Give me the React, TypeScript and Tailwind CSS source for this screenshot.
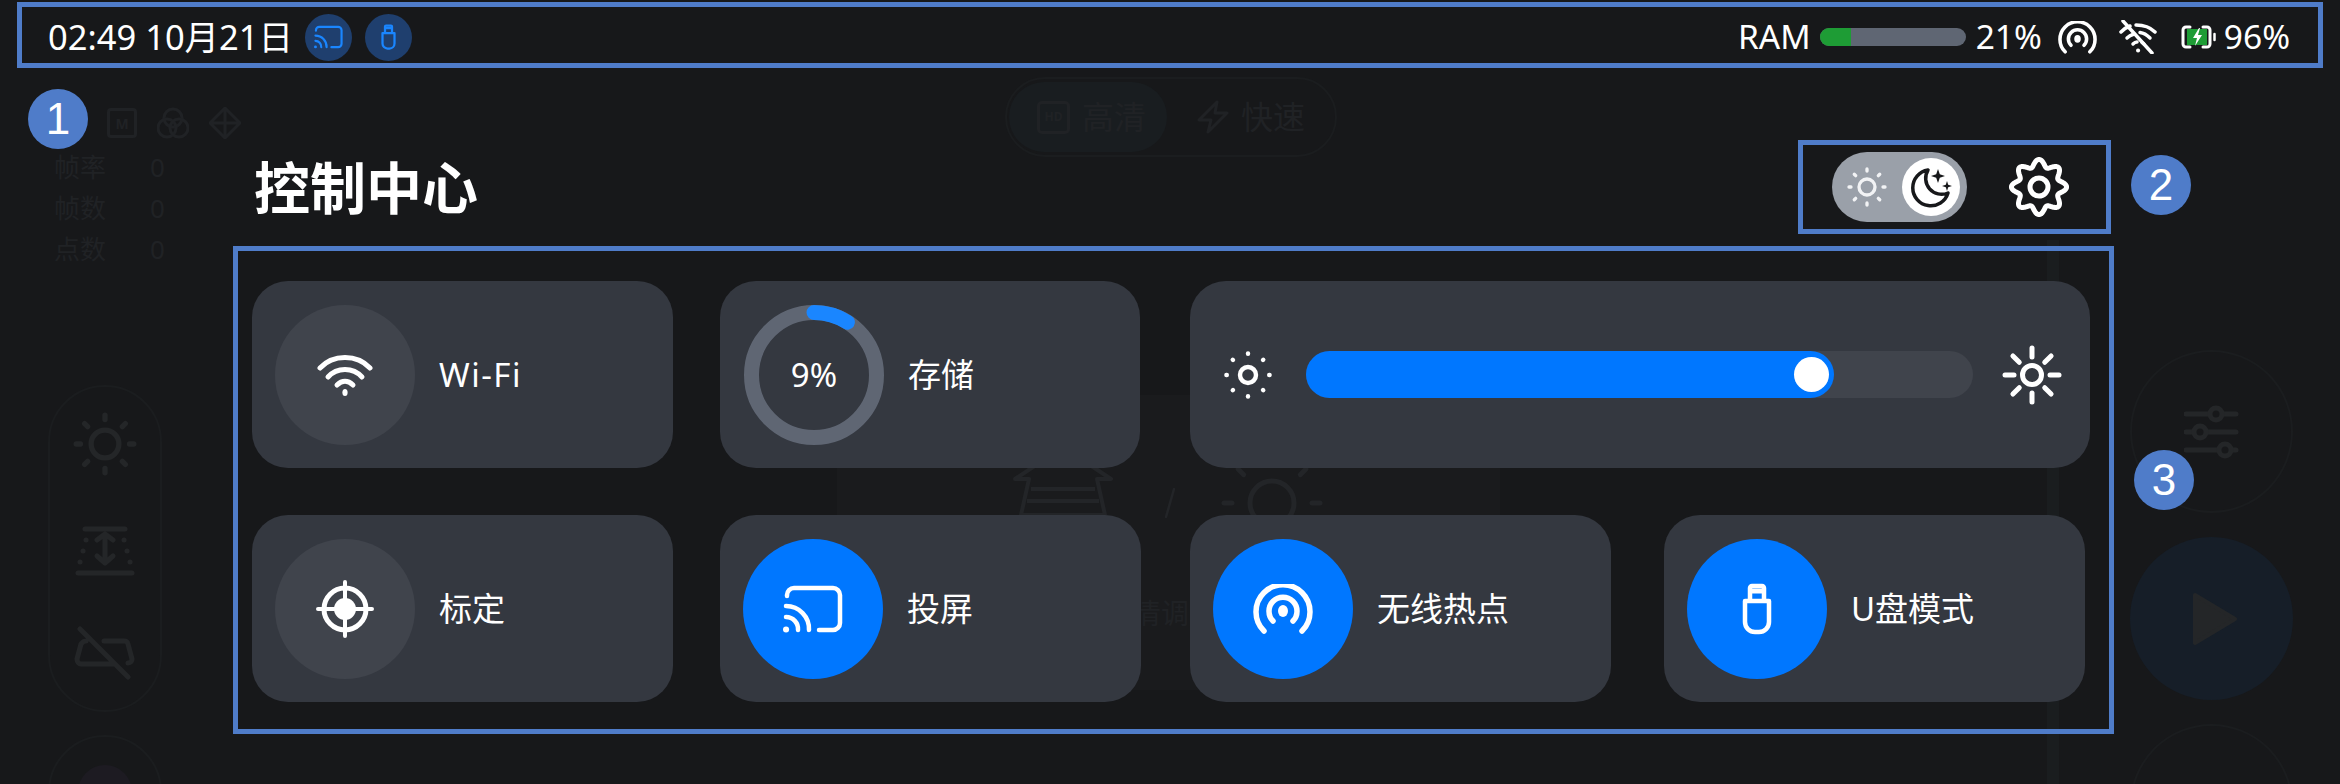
import React from "react";

const WHITE = "#ffffff";

// scalloped outline for the settings gear
const gearPath = (() => {
  const pts: string[] = [];
  for (let i = 0; i <= 160; i++) {
    const t = (i / 160) * Math.PI * 2;
    const r = 24 + 3.6 * Math.cos(8 * t);
    const x = 30 + r * Math.sin(t);
    const y = 30 - r * Math.cos(t);
    pts.push(`${i === 0 ? "M" : "L"}${x.toFixed(2)} ${y.toFixed(2)}`);
  }
  return pts.join(" ") + "Z";
})();

const CastIcon = ({ w, h, color = WHITE }: { w: number; h: number; color?: string }) => (
  <svg width={w} height={h} viewBox="0 0 60 48" fill="none" stroke={color} strokeWidth="4.5" strokeLinecap="round">
    <path d="M4 11V10a7 7 0 0 1 7-7h39a7 7 0 0 1 7 7v28a7 7 0 0 1-7 7H36" />
    <path d="M3 21a23 23 0 0 1 23 24" />
    <path d="M3 32a12 12 0 0 1 12 13" />
    <path d="M3 44.5h.1" strokeWidth="6" />
  </svg>
);

const UsbIcon = ({ w, h, color = WHITE }: { w: number; h: number; color?: string }) => (
  <svg width={w} height={h} viewBox="0 0 30 52" fill="none" stroke={color} strokeWidth="4.5" strokeLinejoin="round">
    <path d="M3 18h24v21a10 10 0 0 1-10 10h-4A10 10 0 0 1 3 39z" />
    <path d="M8 18V5a2 2 0 0 1 2-2h10a2 2 0 0 1 2 2v13" />
    <path d="M9 8h12" strokeWidth="5" />
  </svg>
);

const HotspotIcon = ({ w, h }: { w: number; h: number }) => (
  <svg width={w} height={h} viewBox="0 0 60 50" fill="none" stroke={WHITE} strokeWidth="5.5" strokeLinecap="round">
    <path d="M11 47a27 27 0 1 1 38 0" />
    <path d="M20 37a14 14 0 1 1 20 0" />
    <ellipse cx="30" cy="27" rx="5" ry="6" fill={WHITE} stroke="none" />
  </svg>
);

const WifiIcon = ({ w, h }: { w: number; h: number }) => (
  <svg width={w} height={h} viewBox="0 0 56 42" fill="none" stroke={WHITE} strokeWidth="5" strokeLinecap="round">
    <path d="M3 14C16 0 40 0 53 14" />
    <path d="M11 23C20 13 36 13 45 23" />
    <path d="M20 31C25 26 31 26 36 31" />
    <ellipse cx="28" cy="38.5" rx="2.6" ry="3.5" fill={WHITE} stroke="none" />
  </svg>
);

const WifiOffIcon = () => (
  <svg width="38" height="34" viewBox="0 0 38 34" fill="none" stroke={WHITE} strokeWidth="3.5" strokeLinecap="round">
    <path d="M2 12C5 9 8 7 11 6" />
    <path d="M17 5C24 5 31 7 36 12" />
    <path d="M8 18C10 16 12 15 15 14" />
    <path d="M21 12.5C25 13 28 15 31 18" />
    <path d="M14 24C15 23 16 22 18 22" />
    <path d="M23 22.5C24 23 25 23.5 25 24" />
    <path d="M19 30.5h.1" strokeWidth="4" />
    <path d="M4 1l29 32" />
  </svg>
);

const BatteryIcon = () => (
  <svg width="36" height="24" viewBox="0 0 36 24" fill="none">
    <rect x="7" y="4" width="20" height="16" fill="#1e9c35" />
    <path d="M10 2H6a3 3 0 0 0-3 3v14a3 3 0 0 0 3 3h4" stroke={WHITE} strokeWidth="3" strokeLinecap="round" />
    <path d="M23 2h4a3 3 0 0 1 3 3v14a3 3 0 0 1-3 3h-4" stroke={WHITE} strokeWidth="3" strokeLinecap="round" />
    <path d="M34.5 9v6" stroke={WHITE} strokeWidth="2.5" strokeLinecap="round" />
    <path d="M19 3l-6 10h4l-2 8 7-11h-4l2-7z" fill={WHITE} />
  </svg>
);

const TargetIcon = () => (
  <svg width="58" height="58" viewBox="0 0 58 58" fill="none" stroke={WHITE} strokeLinecap="round">
    <circle cx="29" cy="29" r="21" strokeWidth="5" />
    <circle cx="29" cy="29" r="11" fill={WHITE} stroke="none" />
    <path d="M29 2v54M2 29h54" strokeWidth="4" />
  </svg>
);

const SunIcon = ({
  size,
  r,
  inner,
  outer,
  sw,
  color = WHITE,
}: {
  size: number;
  r: number;
  inner: number;
  outer: number;
  sw: number;
  color?: string;
}) => {
  const ticks = [0, 45, 90, 135, 180, 225, 270, 315];
  return (
    <svg width={size} height={size} viewBox="0 0 60 60" fill="none" stroke={color} strokeWidth={sw} strokeLinecap="round">
      <circle cx="30" cy="30" r={r} />
      {ticks.map((a) => {
        const rad = (a * Math.PI) / 180;
        return (
          <line
            key={a}
            x1={30 + inner * Math.cos(rad)}
            y1={30 + inner * Math.sin(rad)}
            x2={30 + outer * Math.cos(rad)}
            y2={30 + outer * Math.sin(rad)}
          />
        );
      })}
    </svg>
  );
};

const MoonIcon = () => (
  <svg width="44" height="44" viewBox="0 0 44 44" fill="none">
    <path
      d="M19 5A18 18 0 1 0 39 28A16 16 0 0 1 19 5Z"
      fill={WHITE}
      stroke="#17181a"
      strokeWidth="3.5"
      strokeLinejoin="round"
    />
    <path d="M29 4l1.8 5.2L36 11l-5.2 1.8L29 18l-1.8-5.2L22 11l5.2-1.8z" fill="#17181a" />
    <path d="M38 16l1.2 3.8L43 21l-3.8 1.2L38 26l-1.2-3.8L33 21l3.8-1.2z" fill="#17181a" />
  </svg>
);

const GearIcon = () => (
  <svg width="60" height="60" viewBox="0 0 60 60" fill="none" stroke={WHITE} strokeWidth="5" strokeLinejoin="round">
    <path d={gearPath} />
    <circle cx="30" cy="30" r="9" />
  </svg>
);

const StorageRing = () => (
  <div className="relative w-[140px] h-[140px] shrink-0 flex items-center justify-center">
    <svg className="absolute inset-0 -rotate-90" width="140" height="140" viewBox="0 0 140 140" fill="none">
      <circle cx="70" cy="70" r="62.5" stroke="#5f6673" strokeWidth="15" />
      <circle
        cx="70"
        cy="70"
        r="62.5"
        stroke="#1a86ff"
        strokeWidth="15"
        strokeLinecap="round"
        pathLength={100}
        strokeDasharray="9 91"
      />
    </svg>
    <span className="text-[33px] leading-none text-white">9%</span>
  </div>
);

const Tile = ({
  label,
  active,
  icon,
  className,
}: {
  label: React.ReactNode;
  active?: boolean;
  icon: React.ReactNode;
  className?: string;
}) => (
  <div className={`w-[421px] h-[187px] shrink-0 rounded-[36px] bg-[#343840] flex items-center pl-[23px] gap-[24px] ${className ?? ""}`}>
    <div className={`w-[140px] h-[140px] rounded-full flex items-center justify-center ${active ? "bg-[#0077ff]" : "bg-[#40444c]"}`}>
      {icon}
    </div>
    <span className="text-[33px] leading-none text-white">{label}</span>
  </div>
);

// the dimmed app behind the control center
const DimmedApp = () => (
  <div className="absolute inset-0 flex text-[#202225]">
    <div className="w-[837px] shrink-0 pl-[48px] pt-[108px]">
      <div className="flex items-center gap-[20px] ml-[59px] h-[30px]">
        <div className="w-[30px] h-[30px] rounded-[4px] border-[3px] border-[#202225] flex items-center justify-center text-[14px] font-bold">M</div>
        <svg width="32" height="32" viewBox="0 0 32 32" fill="none" stroke="#202225" strokeWidth="3">
          <circle cx="16" cy="11" r="9" />
          <circle cx="10" cy="21" r="9" />
          <circle cx="22" cy="21" r="9" />
        </svg>
        <svg width="32" height="32" viewBox="0 0 32 32" fill="none" stroke="#202225" strokeWidth="3" strokeLinejoin="round">
          <path d="M16 1l15 15-15 15L1 16zM16 1v30M1 16h30" />
        </svg>
      </div>
      <div className="mt-[9px] ml-[6px] flex flex-col text-[26px] leading-[41px]">
        {["帧率", "帧数", "点数"].map((s) => (
          <div key={s} className="flex gap-[44px]">
            <span>{s}</span>
            <span>0</span>
          </div>
        ))}
      </div>
      <div className="mt-[115px] w-[114px] h-[327px] rounded-full border-[2px] border-[#1b1d1f] flex flex-col items-center pt-[25px] gap-[50px]">
        <SunIcon size={64} r={13} inner={23} outer={27} sw={5} color="#242628" />
        <svg width="60" height="50" viewBox="0 0 60 50" fill="none" stroke="#242628" strokeWidth="5" strokeLinecap="round" strokeLinejoin="round">
          <path d="M10 3h40M3 47h54M30 8v28M22 14l8-6 8 6M22 30l8 7 8-7" />
          <path d="M11 14h.1M8 25h.1M5 36h.1M49 14h.1M52 25h.1M55 36h.1" />
        </svg>
        <svg width="62" height="54" viewBox="0 0 62 54" fill="none" stroke="#242628" strokeWidth="5" strokeLinecap="round" strokeLinejoin="round">
          <path d="M6 3l48 48M30 15h20a4 4 0 0 1 4 3l4 15c0 2-1 4-4 4M12 15c-3 0-4 2-5 3L3 33c0 3 2 5 4 5h33" />
        </svg>
      </div>
      <div className="mt-[23px] w-[114px] h-[114px] rounded-full border-[2px] border-[#1b1d1f] flex justify-center pt-[28px]">
        <div className="w-[54px] h-[54px] rounded-full bg-[#1d1b22]" />
      </div>
    </div>

    <div className="w-[663px] shrink-0 pt-[77px]">
      <div className="ml-[168px] w-[332px] h-[80px] rounded-full border-[2px] border-[#1b1d1f] flex items-center text-[32px] leading-none p-[2px]">
        <div className="w-[158px] h-[70px] rounded-full bg-[#191d20] flex items-center pl-[28px] gap-[12px]">
          <div className="w-[33px] h-[33px] rounded-[5px] border-[3px] border-[#202225] flex items-center justify-center text-[12px] font-bold">HD</div>
          <span>高清</span>
        </div>
        <div className="flex items-center gap-[12px] ml-[30px]">
          <svg width="32" height="34" viewBox="0 0 32 34" fill="none" stroke="#202225" strokeWidth="3" strokeLinejoin="round">
            <path d="M20 2L2 20h12l-3 12 19-19H18z" />
          </svg>
          <span>快速</span>
        </div>
      </div>
      <div className="mt-[238px] h-[295px] bg-[#1a1b1d] flex flex-col pl-[176px] pt-[48px]">
        <div className="flex items-start">
          <svg width="100" height="72" viewBox="0 0 100 72" fill="none" stroke="#232528" strokeWidth="4" strokeLinejoin="round">
            <path d="M2 36L50 4l48 32H84L92 72H8l8-36z" />
            <path d="M18 46h64M14 58h72" />
          </svg>
          <svg width="10" height="30" viewBox="0 0 10 30" fill="none" stroke="#232528" strokeWidth="2.5" strokeLinecap="round" className="ml-[52px] mt-[45px]">
            <path d="M9 1L1 29" />
          </svg>
          <div className="ml-[37px]">
            <SunIcon size={120} r={11} inner={20} outer={24} sw={2.5} color="#232528" />
          </div>
        </div>
        <span className="mt-[35px] ml-[120px] text-[28px] leading-[30px]">清调</span>
      </div>
    </div>

    <div className="w-[547px] shrink-0" />
    <div className="w-[12px] shrink-0 mt-[240px] bg-[#1a1d1f]" />
    <div className="w-[163px] shrink-0 ml-[71px] pt-[350px] flex flex-col gap-[24px]">
      <div className="h-[163px] shrink-0 rounded-full border-[2px] border-[#1b1d1f] flex items-center justify-center">
        <svg width="56" height="56" viewBox="0 0 56 56" fill="none" stroke="#242628" strokeWidth="5" strokeLinecap="round">
          <path d="M2 10h50M2 28h50M2 46h50" />
          <circle cx="32" cy="10" r="6" fill="#17181a" />
          <circle cx="16" cy="28" r="6" fill="#17181a" />
          <circle cx="41" cy="46" r="6" fill="#17181a" />
        </svg>
      </div>
      <div className="h-[163px] shrink-0 rounded-full bg-[#161e28] flex items-center justify-center">
        <svg width="46" height="54" viewBox="0 0 46 54" className="ml-[6px]">
          <path d="M3 3l40 24-40 24z" fill="#242628" stroke="#242628" strokeWidth="4" strokeLinejoin="round" />
        </svg>
      </div>
      <div className="h-[163px] shrink-0 rounded-full border-[2px] border-[#1b1d1f]" />
    </div>
  </div>
);

const StatusBar = () => (
  <div className="h-[74px] pl-[48px] pr-[50px] flex items-center justify-between leading-none text-white">
    <div className="flex items-center text-[34.5px]">
      <span>02:49 10月21日</span>
      <div className="ml-[12px] w-[47px] h-[47px] rounded-full bg-[#1f3f6e] flex items-center justify-center">
        <CastIcon w={29} h={24} color="#1a86ff" />
      </div>
      <div className="ml-[13px] w-[47px] h-[47px] rounded-full bg-[#1f3f6e] flex items-center justify-center">
        <UsbIcon w={15} h={26} color="#1a86ff" />
      </div>
    </div>
    <div className="flex items-center text-[33.5px]">
      <span>RAM</span>
      <div className="ml-[9px] w-[146px] h-[18px] rounded-full bg-[#5f6673] overflow-hidden">
        <div className="w-[31px] h-full bg-[#1e9c35]" />
      </div>
      <span className="ml-[10px]">21%</span>
      <div className="ml-[16px]">
        <HotspotIcon w={39} h={33} />
      </div>
      <div className="ml-[22px]">
        <WifiOffIcon />
      </div>
      <div className="ml-[23px]">
        <BatteryIcon />
      </div>
      <span className="ml-[8px]">96%</span>
    </div>
  </div>
);

const ControlCenter = () => (
  <div className="absolute inset-0">
    <StatusBar />

    <div className="mt-[78px] h-[70px] pl-[254px] flex items-center">
      <h1 className="text-[56px] leading-none font-bold text-white">控制中心</h1>
      <div className="ml-auto mr-[271px] flex items-center gap-[42px]">
        <div className="w-[135px] h-[70px] rounded-full bg-[#9aa0a9] flex items-center pl-[15px] pr-[7px]">
          <SunIcon size={40} r={12} inner={24} outer={27} sw={5} color="#f2f3f5" />
          <div className="ml-auto w-[58px] h-[58px] rounded-full bg-white flex items-center justify-center">
            <MoonIcon />
          </div>
        </div>
        <GearIcon />
      </div>
    </div>

    <div className="mt-[59px] pl-[252px] flex flex-col gap-[47px]">
      <div className="flex">
        <Tile label={<span className="tracking-[1.5px]">Wi-Fi</span>} icon={<WifiIcon w={56} h={42} />} />
        <div className="ml-[47px] w-[420px] h-[187px] shrink-0 rounded-[36px] bg-[#343840] flex items-center pl-[24px] gap-[24px]">
          <StorageRing />
          <span className="text-[33px] leading-none text-white">存储</span>
        </div>
        <div className="ml-[50px] w-[900px] h-[187px] shrink-0 rounded-[36px] bg-[#343840] flex items-center pl-[34px]">
          <SunIcon size={48} r={10} inner={26.5} outer={27} sw={5.5} />
          <div className="ml-[34px] w-[667px] h-[47px] rounded-full bg-[#40444c]">
            <div className="w-[528px] h-full rounded-full bg-[#0077ff] flex items-center justify-end pr-[5px]">
              <div className="w-[35px] h-[35px] rounded-full bg-white" />
            </div>
          </div>
          <div className="ml-[29px]">
            <SunIcon size={60} r={9.5} inner={18} outer={27} sw={5} />
          </div>
        </div>
      </div>
      <div className="flex">
        <Tile label="标定" icon={<TargetIcon />} />
        <Tile label="投屏" active icon={<CastIcon w={60} h={48} />} className="ml-[47px]" />
        <Tile label="无线热点" active icon={<HotspotIcon w={60} h={50} />} className="ml-[49px]" />
        <Tile label="U盘模式" active icon={<UsbIcon w={30} h={52} />} className="ml-[53px]" />
      </div>
    </div>
  </div>
);

const Badge = ({ n, className }: { n: number; className: string }) => (
  <div className={`absolute w-[60px] h-[60px] rounded-full bg-[#4f7cc9] flex items-center justify-center text-white text-[44px] leading-none font-['Liberation_Sans',sans-serif] ${className}`}>
    {n}
  </div>
);

export default function App() {
  return (
    <div className="relative w-[2340px] h-[784px] overflow-hidden bg-[#17181a] font-['Noto_Sans','Noto_Sans_CJK_SC',sans-serif]">
      <DimmedApp />
      <ControlCenter />

      {/* Annotation overlay */}
      <div className="absolute left-[17px] top-[2px] w-[2306px] h-[66px] border-[5px] border-[#4f7cc9]" />
      <div className="absolute left-[1798px] top-[140px] w-[313px] h-[94px] border-[5px] border-[#4f7cc9]" />
      <div className="absolute left-[233px] top-[246px] w-[1881px] h-[488px] border-[5px] border-[#4f7cc9]" />
      <Badge n={1} className="left-[28px] top-[89px]" />
      <Badge n={2} className="left-[2131px] top-[155px]" />
      <Badge n={3} className="left-[2134px] top-[450px]" />
    </div>
  );
}
